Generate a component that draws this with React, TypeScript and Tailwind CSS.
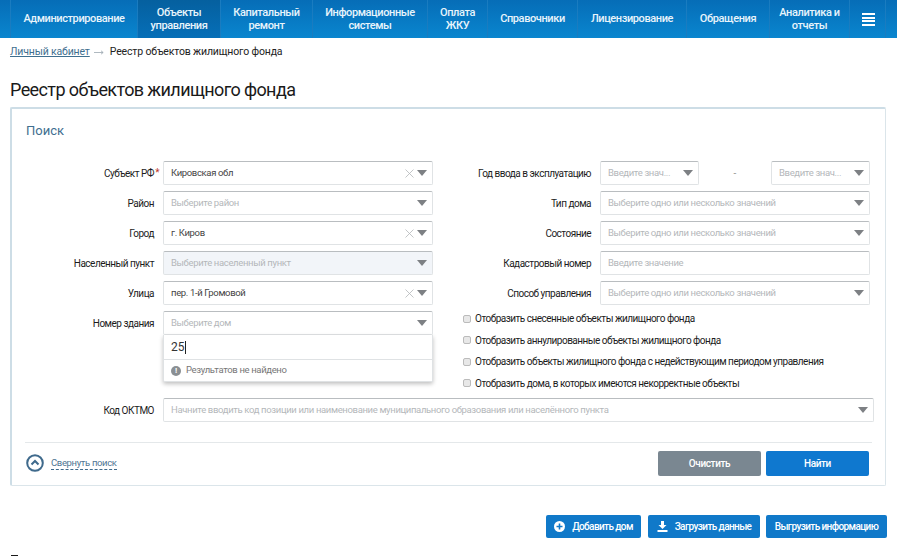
const navItems = [
  { label: ["Объекты", "управления"], width: "w-[83px]", active: true },
  { label: ["Капитальный", "ремонт"], width: "w-[92px]" },
  { label: ["Информационные", "системы"], width: "w-[115px]" },
  { label: ["Оплата", "ЖКУ"], width: "w-[60px]" },
  { label: ["Справочники"], width: "w-[90px]" },
  { label: ["Лицензирование"], width: "w-[109px]" },
  { label: ["Обращения"], width: "w-[83px]" },
  { label: ["Аналитика и", "отчеты"], width: "w-[80px]" },
];

const checkboxes = [
  "Отобразить снесенные объекты жилищного фонда",
  "Отобразить аннулированные объекты жилищного фонда",
  "Отобразить объекты жилищного фонда с недействующим периодом управления",
  "Отобразить дома, в которых имеются некорректные объекты",
];

function Caret() {
  return (
    <svg className="h-[6px] w-[10px] shrink-0" viewBox="0 0 10 6">
      <path d="M0 0h10L5 6z" fill="#7d8084" />
    </svg>
  );
}

function Clear() {
  return (
    <svg className="mr-[3px] h-[9px] w-[9px] shrink-0" viewBox="0 0 9 9">
      <path d="M0.5 0.5l8 8M8.5 0.5l-8 8" stroke="#b4b7ba" strokeWidth="0.8" fill="none" />
    </svg>
  );
}

function Select({
  value,
  placeholder,
  disabled,
  caret = true,
  className = "w-[270px]",
}: {
  value?: string;
  placeholder?: string;
  disabled?: boolean;
  caret?: boolean;
  className?: string;
}) {
  return (
    <div
      className={`flex h-6 shrink-0 items-center rounded-[2px] border border-[#e0e3e5] border-t-[#b9bdc0] pl-[7px] pr-[5px] text-[9.5px] tracking-[-0.35px] ${
        disabled ? "bg-[#f2f5f9]" : "bg-white"
      } ${className}`}
    >
      <span className={`min-w-0 flex-1 truncate ${value ? "text-[#444]" : "text-[#b4b7ba]"}`}>
        {value ?? placeholder}
      </span>
      {value && <Clear />}
      {caret && <Caret />}
    </div>
  );
}

function Field({ label, required, children }: { label: string; required?: boolean; children: React.ReactNode }) {
  return (
    <div className="flex h-6 items-center">
      <div className="relative w-[129px] shrink-0 text-right text-[10px] tracking-[-0.5px] text-[#1c1c1c]">
        {label}
        {required && <span className="absolute right-[-5px] top-[-1px] text-[#c0392b]">*</span>}
      </div>
      <div className="ml-[9px]">{children}</div>
    </div>
  );
}

function RightField({ label, children }: { label: string; children: React.ReactNode }) {
  return (
    <div className="flex h-6 items-center">
      <div className="w-[141px] shrink-0 text-right text-[10px] tracking-[-0.5px] text-[#1c1c1c]">{label}</div>
      <div className="ml-[9px]">{children}</div>
    </div>
  );
}

export default function App() {
  return (
    <div className="h-[556px] overflow-hidden bg-white font-['Roboto',sans-serif]">
      {/* Top menu */}
      <nav className="flex h-[38px] bg-gradient-to-b from-[#066db7] to-[#0a86cf] pl-[10px] text-[11px] font-medium leading-[12.5px] tracking-[-0.4px] text-[#e8f4fb]">
        <div className="flex w-[127px] items-center justify-center border-l border-[#1a7cc0] pt-px">Администрирование</div>
        {navItems.map((item) => (
          <div
            key={item.label[0]}
            className={`flex flex-col items-center justify-center border-l border-[#1a7cc0] pt-px ${item.width} ${
              item.active ? "bg-gradient-to-b from-[#05609f] to-[#066fb8]" : ""
            }`}
          >
            {item.label.map((line) => (
              <span key={line}>{line}</span>
            ))}
          </div>
        ))}
        <div className="flex w-[37px] items-center justify-center border-x border-[#1a7cc0] pl-px pt-px">
          <div className="flex w-[13px] flex-col gap-[1.5px]">
            <span className="h-[2px] bg-white" />
            <span className="h-[2px] bg-white" />
            <span className="h-[2px] bg-white" />
            <span className="h-[2px] bg-white" />
          </div>
        </div>
      </nav>

      <div className="mt-[7px] flex h-[13px] items-center pl-[10px] text-[10.5px] tracking-[-0.15px] text-[#222]">
        <span className="text-[#3f6f8f] underline">Личный кабинет</span>
        <svg className="ml-[4px] mr-[6px] mt-[2px] h-[5px] w-[10px]" viewBox="0 0 10 5">
          <path d="M0 2.5h9M7 0.8l2.2 1.7L7 4.2" fill="none" stroke="#9aa7b0" strokeWidth="0.8" />
        </svg>
        <span>Реестр объектов жилищного фонда</span>
      </div>

      <h1 className="ml-[10px] mt-[21px] text-[18px] font-normal leading-[22px] tracking-[-0.6px] text-[#1a1a1a]">
        Реестр объектов жилищного фонда
      </h1>

      {/* Search card */}
      <section className="ml-[10px] mt-[6px] h-[379px] w-[876px] rounded-[2px] border border-[#dbe5ea] border-l-2 border-t-2 border-l-[#cddde6] border-t-[#cddde6]">
        <h2 className="ml-[14px] mt-[13px] text-[13px] leading-[18px] text-[#3f6f8f]">Поиск</h2>

        <div className="ml-[13px] mt-[9px] pt-[12px]">
          <div className="flex">
            <div className="flex w-[425px] flex-col gap-[6px]">
              <Field label="Субъект РФ" required>
                <Select value="Кировская обл" />
              </Field>
              <Field label="Район">
                <Select placeholder="Выберите район" />
              </Field>
              <Field label="Город">
                <Select value="г. Киров" />
              </Field>
              <Field label="Населенный пункт">
                <Select placeholder="Выберите населенный пункт" disabled />
              </Field>
              <Field label="Улица">
                <Select value="пер. 1-й Громовой" />
              </Field>
              <Field label="Номер здания">
                <div className="relative">
                  <Select placeholder="Выберите дом" />
                  <div className="absolute left-0 top-6 z-10 w-[270px] rounded-b-[2px] border border-t-0 border-[#dfe2e4] bg-white shadow-[0_2px_4px_rgba(0,0,0,0.25)]">
                    <div className="flex h-[25px] items-center border-b border-[#dfe2e4] pl-[7px] text-[12px] text-[#333]">
                      25
                      <span className="h-[13px] w-px bg-[#222]" />
                    </div>
                    <div className="flex h-[21px] items-center pl-[7px] text-[9.5px] tracking-[-0.35px] text-[#777]">
                      <span className="mr-[5px] flex h-[10px] w-[10px] items-center justify-center rounded-full bg-[#8a8f93] text-[8px] font-bold leading-none text-white">
                        !
                      </span>
                      Результатов не найдено
                    </div>
                  </div>
                </div>
              </Field>
            </div>

            <div className="flex flex-col gap-[6px]">
              <RightField label="Год ввода в эксплуатацию">
                <div className="flex w-[270px] items-center justify-between">
                  <Select placeholder="Введите знач..." className="w-[99px]" />
                  <span className="text-[10px] text-[#999]">-</span>
                  <Select placeholder="Введите знач..." className="w-[99px]" />
                </div>
              </RightField>
              <RightField label="Тип дома">
                <Select placeholder="Выберите одно или несколько значений" />
              </RightField>
              <RightField label="Состояние">
                <Select placeholder="Выберите одно или несколько значений" />
              </RightField>
              <RightField label="Кадастровый номер">
                <Select placeholder="Введите значение" caret={false} />
              </RightField>
              <RightField label="Способ управления">
                <Select placeholder="Выберите одно или несколько значений" />
              </RightField>
              <div className="ml-[13px] mt-[1px] flex flex-col gap-[8px] text-[10px] leading-[13.5px] tracking-[-0.5px] text-[#1c1c1c]">
                {checkboxes.map((text) => (
                  <div key={text} className="flex items-center">
                    <span className="mr-[4px] h-[8px] w-[8px] rounded-[2px] border border-[#bbb] bg-[#e8e8e8]" />
                    {text}
                  </div>
                ))}
              </div>
            </div>
          </div>

          <div className="mt-[8px]">
            <Field label="Код ОКТМО">
              <Select
                placeholder="Начните вводить код позиции или наименование муниципального образования или населённого пункта"
                className="w-[711px]"
              />
            </Field>
          </div>
        </div>

        <div className="ml-[13px] mr-[13px] mt-[20px] flex h-[41px] items-center justify-between border-t border-[#e4e8ea] pr-[3px]">
          <div className="flex items-center">
            <svg className="ml-[1px] h-[18px] w-[18px]" viewBox="0 0 18 18">
              <circle cx="9" cy="9" r="7.8" fill="none" stroke="#3f6a8c" strokeWidth="2" />
              <path d="M5.5 10.5L9 7l3.5 3.5" fill="none" stroke="#3f6a8c" strokeWidth="2" />
            </svg>
            <span className="ml-[7px] border-b border-dashed border-[#3f6a8c] text-[9.5px] leading-[12px] tracking-[-0.35px] text-[#4f7693]">
              Свернуть поиск
            </span>
          </div>
          <div className="flex gap-[5px] text-[10px] font-medium tracking-[-0.4px] text-white">
            <button className="h-[25px] w-[103px] rounded-[2px] bg-[#7a8791]">Очистить</button>
            <button className="h-[25px] w-[103px] rounded-[2px] bg-[#0f78cf]">Найти</button>
          </div>
        </div>
      </section>

      {/* Actions */}
      <div className="mr-[10px] mt-[29px] flex justify-end gap-[6px] whitespace-nowrap text-[10px] font-medium tracking-[-0.6px] text-white">
        <button className="mr-[1px] flex h-[23px] w-[95px] items-center justify-center rounded-[2px] bg-[#1079c9]">
          <svg className="mr-[7px] h-[11px] w-[11px]" viewBox="0 0 11 11">
            <circle cx="5.5" cy="5.5" r="5.5" fill="#fff" />
            <path d="M5.5 2.5v6M2.5 5.5h6" stroke="#1079c9" strokeWidth="1.6" />
          </svg>
          Добавить дом
        </button>
        <button className="flex h-[23px] w-[112px] items-center justify-center rounded-[2px] bg-[#1079c9]">
          <svg className="mr-[7px] h-[11px] w-[11px]" viewBox="0 0 11 11">
            <path d="M4 0h3v4h2.5L5.5 8 1.5 4H4zM0.5 9h10v2H0.5z" fill="#fff" />
          </svg>
          Загрузить данные
        </button>
        <button className="h-[23px] w-[121px] rounded-[2px] bg-[#1079c9]">Выгрузить информацию</button>
      </div>

      {/* top edge of the next heading, cut off by the window */}
      <div className="ml-[11px] mt-[17px] h-px w-[7px] bg-[#1a1a1a]" />
    </div>
  );
}
